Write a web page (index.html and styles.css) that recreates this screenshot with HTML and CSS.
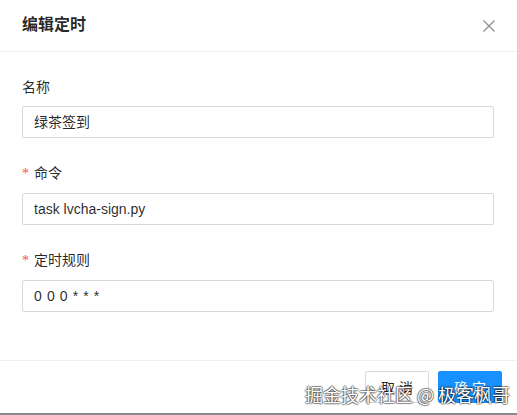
FILE: index.html
```html
<!DOCTYPE html>
<html lang="zh-CN">
<head>
<meta charset="utf-8">
<link rel="stylesheet" href="styles.css">
</head>
<body>
<div class="modal">
  <div class="modal-header">
    <div class="modal-title">编辑定时</div>
    <button class="modal-close" aria-label="关闭">
      <svg width="14" height="14" viewBox="0 0 14 14"><path d="M1.5 1.5 L12.5 12.5 M12.5 1.5 L1.5 12.5" stroke="#8c8c8c" stroke-width="1.2" fill="none"/></svg>
    </button>
  </div>
  <div class="modal-body">
    <div class="form-item">
      <label class="form-label">名称</label>
      <div class="input">绿茶签到</div>
    </div>
    <div class="form-item">
      <label class="form-label"><span class="req">*</span>命令</label>
      <div class="input">task lvcha-sign.py</div>
    </div>
    <div class="form-item">
      <label class="form-label"><span class="req">*</span>定时规则</label>
      <div class="input cron">0 0 0 * * *</div>
    </div>
  </div>
  <div class="modal-footer">
    <button class="btn">取 消</button>
    <button class="btn btn-primary">确 定</button>
    <div class="watermark">掘金技术社区 @ 极客枫哥</div>
  </div>
</div>
<div class="bottom-bar"></div>
</body>
</html>
```
FILE: styles.css
```css
html, body {
  margin: 0;
  padding: 0;
  background: #fff;
}
body {
  font-family: "Liberation Sans", "Noto Sans CJK SC", sans-serif;
  font-size: 14px;
  color: rgba(0,0,0,0.85);
  width: 517px;
  height: 415px;
  overflow: hidden;
}
.modal {
  background: #fff;
}
.modal-header {
  height: 52px;
  box-sizing: border-box;
  padding: 0 22px;
  border-bottom: 1px solid #f0f0f0;
  display: flex;
  align-items: center;
  justify-content: space-between;
}
.modal-title {
  font-size: 16px;
  font-weight: 700;
  line-height: 22px;
  color: rgba(0,0,0,0.85);
  margin-top: -1px;
}
.modal-close {
  border: 0;
  background: none;
  padding: 0;
  width: 14px;
  height: 14px;
  margin-right: -1px;
  display: flex;
}
.modal-body {
  padding: 24px 23px 0 22px;
}
.form-item {
  margin-bottom: 24px;
}
.form-item:last-child {
  margin-bottom: 48px;
}
.form-label {
  display: block;
  line-height: 22px;
  padding-bottom: 8px;
  color: rgba(0,0,0,0.85);
}
.req {
  color: #ff4d4f;
  font-family: "Liberation Serif", serif;
  margin-right: 5px;
  font-size: 14px;
}
.input {
  height: 32px;
  box-sizing: border-box;
  border: 1px solid #d9d9d9;
  border-radius: 2px;
  padding: 4px 11px;
  line-height: 22px;
  color: rgba(0,0,0,0.85);
}
.cron {
  letter-spacing: 0.6px;
}
.modal-footer {
  position: relative;
  border-top: 1px solid #f0f0f0;
  padding: 10px 15px 10px 16px;
  display: flex;
  justify-content: flex-end;
  gap: 9px;
}
.btn {
  height: 32px;
  width: 64px;
  box-sizing: border-box;
  border: 1px solid #d9d9d9;
  border-radius: 2px;
  background: #fff;
  font-family: inherit;
  font-size: 14px;
  color: rgba(0,0,0,0.85);
  padding: 0;
}
.btn-primary {
  background: #1890ff;
  border-color: #1890ff;
  color: #fff;
}
.watermark {
  position: absolute;
  left: 305px;
  top: 20px;
  font-size: 18px;
  line-height: 26px;
  color: #fff;
  font-family: "Noto Sans CJK SC", sans-serif;
  text-shadow: 1px 0 1px rgba(0,0,0,0.45), -1px 0 1px rgba(0,0,0,0.45), 0 1px 1px rgba(0,0,0,0.45), 0 -1px 1px rgba(0,0,0,0.45);
  white-space: nowrap;
  pointer-events: none;
}
.bottom-bar {
  height: 3px;
  background: #888;
}
```
